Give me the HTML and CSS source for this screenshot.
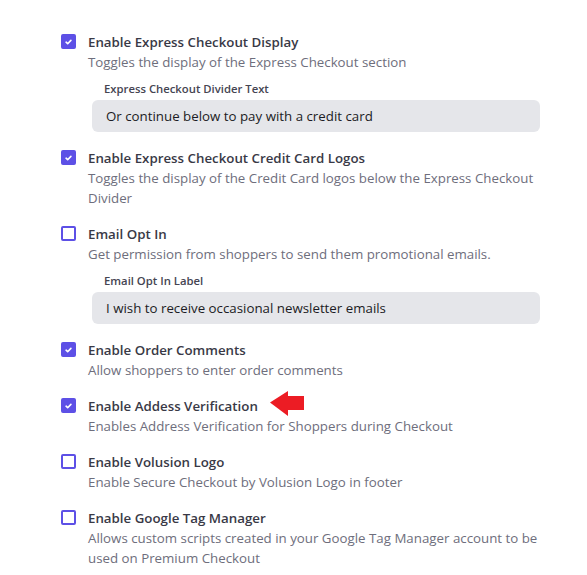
FILE: index.html
```html
<!DOCTYPE html>
<html>
<head>
<meta charset="utf-8">
<link rel="stylesheet" href="styles.css">
</head>
<body>
<div class="settings">
  <div class="item">
    <span class="box checked"><svg viewBox="0 0 16 16"><path d="M4.5 8.3l2.3 2.2 4.7-4.8" /></svg></span>
    <div class="body">
      <div class="title">Enable Express Checkout Display</div>
      <div class="desc">Toggles the display of the Express Checkout section</div>
      <div class="field">
        <div class="flabel">Express Checkout Divider Text</div>
        <div class="input">Or continue below to pay with a credit card</div>
      </div>
    </div>
  </div>
  <div class="item">
    <span class="box checked"><svg viewBox="0 0 16 16"><path d="M4.5 8.3l2.3 2.2 4.7-4.8" /></svg></span>
    <div class="body">
      <div class="title">Enable Express Checkout Credit Card Logos</div>
      <div class="desc">Toggles the display of the Credit Card logos below the Express Checkout Divider</div>
    </div>
  </div>
  <div class="item">
    <span class="box"></span>
    <div class="body">
      <div class="title">Email Opt In</div>
      <div class="desc">Get permission from shoppers to send them promotional emails.</div>
      <div class="field">
        <div class="flabel">Email Opt In Label</div>
        <div class="input">I wish to receive occasional newsletter emails</div>
      </div>
    </div>
  </div>
  <div class="item">
    <span class="box checked"><svg viewBox="0 0 16 16"><path d="M4.5 8.3l2.3 2.2 4.7-4.8" /></svg></span>
    <div class="body">
      <div class="title">Enable Order Comments</div>
      <div class="desc">Allow shoppers to enter order comments</div>
    </div>
  </div>
  <div class="item">
    <span class="box checked"><svg viewBox="0 0 16 16"><path d="M4.5 8.3l2.3 2.2 4.7-4.8" /></svg></span>
    <div class="body">
      <div class="title">Enable Addess Verification<svg class="arrow" viewBox="0 0 34 25"><path d="M0 11.5L18 0V5H34V19H18V25Z"/></svg></div>
      <div class="desc">Enables Address Verification for Shoppers during Checkout</div>
    </div>
  </div>
  <div class="item">
    <span class="box"></span>
    <div class="body">
      <div class="title">Enable Volusion Logo</div>
      <div class="desc">Enable Secure Checkout by Volusion Logo in footer</div>
    </div>
  </div>
  <div class="item">
    <span class="box"></span>
    <div class="body">
      <div class="title">Enable Google Tag Manager</div>
      <div class="desc">Allows custom scripts created in your Google Tag Manager account to be used on Premium Checkout</div>
    </div>
  </div>
</div>
</body>
</html>
```

FILE: styles.css
```css
html, body {
  margin: 0;
  background: #ffffff;
}
body {
  font-family: "Open Sans", "Noto Sans", sans-serif;
  font-size: 13.3px;
  line-height: 20px;
  color: #3b3b48;
}
.settings {
  width: 480px;
  margin-left: 60px;
  padding-top: 32px;
  display: flex;
  flex-direction: column;
  gap: 16px;
}
.item {
  display: flex;
  align-items: flex-start;
}
.box {
  flex: none;
  box-sizing: border-box;
  width: 15px;
  height: 15px;
  margin-top: 2px;
  margin-left: 1px;
  margin-right: 12px;
  border: 2px solid #5d50e6;
  border-radius: 2px;
  background: #fff;
  display: flex;
  align-items: center;
  justify-content: center;
}
.box.checked {
  background: #5d50e6;
}
.box svg {
  width: 12px;
  height: 12px;
  fill: none;
  stroke: #fff;
  stroke-width: 2.4;
  stroke-linecap: round;
  stroke-linejoin: round;
}
.body {
  flex: 1;
  min-width: 0;
}
.title {
  font-weight: 600;
  color: #393946;
  position: relative;
}
.desc {
  color: #6e6e7c;
}
.field {
  margin-top: 8px;
  margin-left: 4px;
}
.flabel {
  font-size: 11.3px;
  font-weight: 600;
  line-height: 18px;
  color: #454552;
  padding-left: 12px;
}
.input {
  margin-top: 2px;
  height: 32px;
  line-height: 32px;
  background: #e5e6ea;
  border-radius: 6px;
  padding-left: 14px;
  color: #1c1c24;
}
.arrow {
  position: absolute;
  left: 182px;
  top: -5px;
  width: 34px;
  height: 25px;
  fill: #ec1c24;
}
```
